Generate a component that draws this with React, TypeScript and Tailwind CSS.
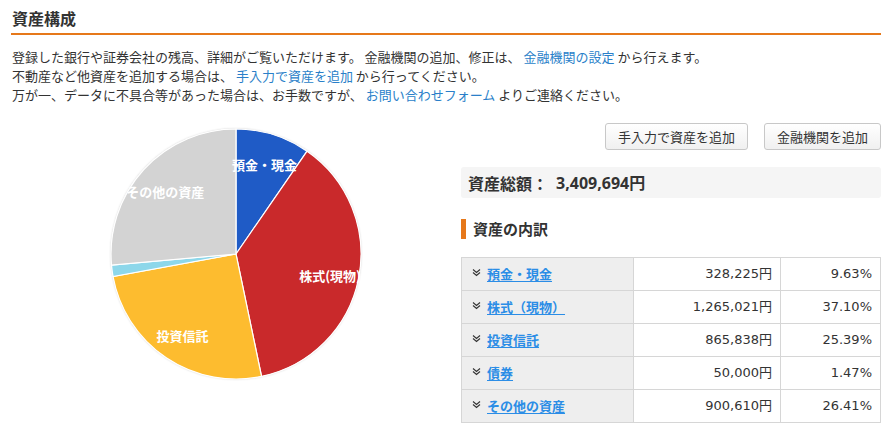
import React from 'react';

const font = { fontFamily: '"Noto Sans CJK JP", "Noto Sans", sans-serif' };
const numFont = { fontFamily: '"DejaVu Sans", "Noto Sans CJK JP", sans-serif' };

const slices = [
  { name: '預金・現金', value: 328225, pct: '9.63%', color: '#1f5bc6', label: true },
  { name: '株式（現物）', chart: '株式(現物)', value: 1265021, pct: '37.10%', color: '#c9292b', label: true },
  { name: '投資信託', value: 865838, pct: '25.39%', color: '#fdbc2f', label: true },
  { name: '債券', value: 50000, pct: '1.47%', color: '#8dd7ea', label: false },
  { name: 'その他の資産', value: 900610, pct: '26.41%', color: '#d3d3d3', label: true },
];

const total = slices.reduce((s, x) => s + x.value, 0);

const Pie: React.FC = () => {
  const cx = 130;
  const cy = 131;
  const r = 125;
  let acc = 0;
  const pt = (a: number, rad: number) => [cx + rad * Math.sin(a), cy - rad * Math.cos(a)];
  return (
    <svg width="260" height="262" viewBox="0 0 260 262">
      <defs>
        <filter id="sh" x="-10%" y="-10%" width="120%" height="120%">
          <feDropShadow dx="0" dy="0" stdDeviation="1.2" floodColor="#000" floodOpacity="0.25" />
        </filter>
      </defs>
      <circle cx={cx} cy={cy} r={r} fill="#fff" filter="url(#sh)" />
      {slices.map((s) => {
        const a0 = (acc / total) * Math.PI * 2;
        acc += s.value;
        const a1 = (acc / total) * Math.PI * 2;
        const [x0, y0] = pt(a0, r);
        const [x1, y1] = pt(a1, r);
        const large = a1 - a0 > Math.PI ? 1 : 0;
        return (
          <path
            key={s.name}
            d={`M${cx} ${cy} L${x0} ${y0} A${r} ${r} 0 ${large} 1 ${x1} ${y1} Z`}
            fill={s.color}
            stroke="#fff"
            strokeWidth="1.2"
          />
        );
      })}
      {(() => {
        let a = 0;
        return slices.map((s) => {
          const a0 = (a / total) * Math.PI * 2;
          a += s.value;
          const a1 = (a / total) * Math.PI * 2;
          if (!s.label) return null;
          const [lx, ly] = pt((a0 + a1) / 2, 96);
          return (
            <text
              key={s.name}
              x={lx}
              y={ly + 7.5}
              textAnchor="middle"
              fill="#fff"
              fontSize="13"
              fontWeight="bold"
              style={font}
            >
              {s.chart ?? s.name}
            </text>
          );
        });
      })()}
    </svg>
  );
};

const Chevrons: React.FC = () => (
  <svg width="9" height="9" viewBox="0 0 9 9" className="shrink-0 -mt-[2px]">
    <path d="M1 1.5 L4.5 4.5 L8 1.5 M1 4.5 L4.5 7.5 L8 4.5" fill="none" stroke="#333" strokeWidth="1.1" />
  </svg>
);

const App: React.FC = () => {
  return (
    <div className="w-[894px] h-[443px] bg-white text-[#333] pl-[11px] pr-[13px] pt-[7px] overflow-hidden" style={font}>
      <h1 className="text-[16px] font-bold leading-[22px] pl-[1px] text-[#333]">資産構成</h1>
      <div className="h-[2px] bg-[#e6781a] mt-[4px]" />

      <div className="mt-[12px] pl-[1px] text-[13px] leading-[19px] text-[#333]">
        <p>
          登録した銀行や証券会社の残高、詳細がご覧いただけます。 金融機関の追加、修正は、{' '}
          <span className="text-[#2a7fc9]">金融機関の設定</span> から行えます。
        </p>
        <p>
          不動産など他資産を追加する場合は、 <span className="text-[#2a7fc9]">手入力で資産を追加</span> から行ってください。
        </p>
        <p>
          万が一、データに不具合等があった場合は、お手数ですが、{' '}
          <span className="text-[#2a7fc9]">お問い合わせフォーム</span> よりご連絡ください。
        </p>
      </div>

      <div className="flex mt-[19px]">
        <div className="w-[450px] flex justify-center">
          <Pie />
        </div>

        <div className="w-[420px]">
          <div className="flex justify-end gap-[16px]">
            <button className="h-[27px] px-[12px] text-[13px] text-[#333] border border-[#c8c8c8] rounded-[3px] bg-gradient-to-b from-white to-[#f0f0f0]">
              手入力で資産を追加
            </button>
            <button className="h-[27px] px-[12px] text-[13px] text-[#333] border border-[#c8c8c8] rounded-[3px] bg-gradient-to-b from-white to-[#f0f0f0]">
              金融機関を追加
            </button>
          </div>

          <div className="mt-[17px] h-[31px] bg-[#f5f5f5] rounded-[3px] flex items-center px-[7px] text-[16px] font-bold text-[#333]">
            <span>資産総額：</span>
            <span className="ml-[8px]" style={{ fontFamily: '"Noto Sans", "Noto Sans CJK JP", sans-serif' }}>3,409,694円</span>
          </div>

          <div className="mt-[20px] flex items-center gap-[7px]">
            <div className="w-[5px] h-[20px] bg-[#e6781a]" />
            <h2 className="text-[15px] font-bold text-[#333]">資産の内訳</h2>
          </div>

          <table className="mt-[16px] w-full border-collapse text-[13px]">
            <tbody>
              {slices.map((s) => (
                <tr key={s.name} className="h-[33px]">
                  <td className="w-[172px] bg-[#eeeeee] border border-[#d6d6d6] pl-[10px]">
                    <div className="flex items-center gap-[6px]">
                      <Chevrons />
                      <span className="text-[#2b8de6] font-bold underline underline-offset-2">{s.name}</span>
                    </div>
                  </td>
                  <td className="w-[147px] border border-[#d6d6d6] text-right pr-[8px] text-[#333]" style={numFont}>
                    {s.value.toLocaleString('en-US')}円
                  </td>
                  <td className="border border-[#d6d6d6] text-right pr-[8px] text-[#333]" style={numFont}>
                    {s.pct}
                  </td>
                </tr>
              ))}
            </tbody>
          </table>
        </div>
      </div>
    </div>
  );
};

export default App;
